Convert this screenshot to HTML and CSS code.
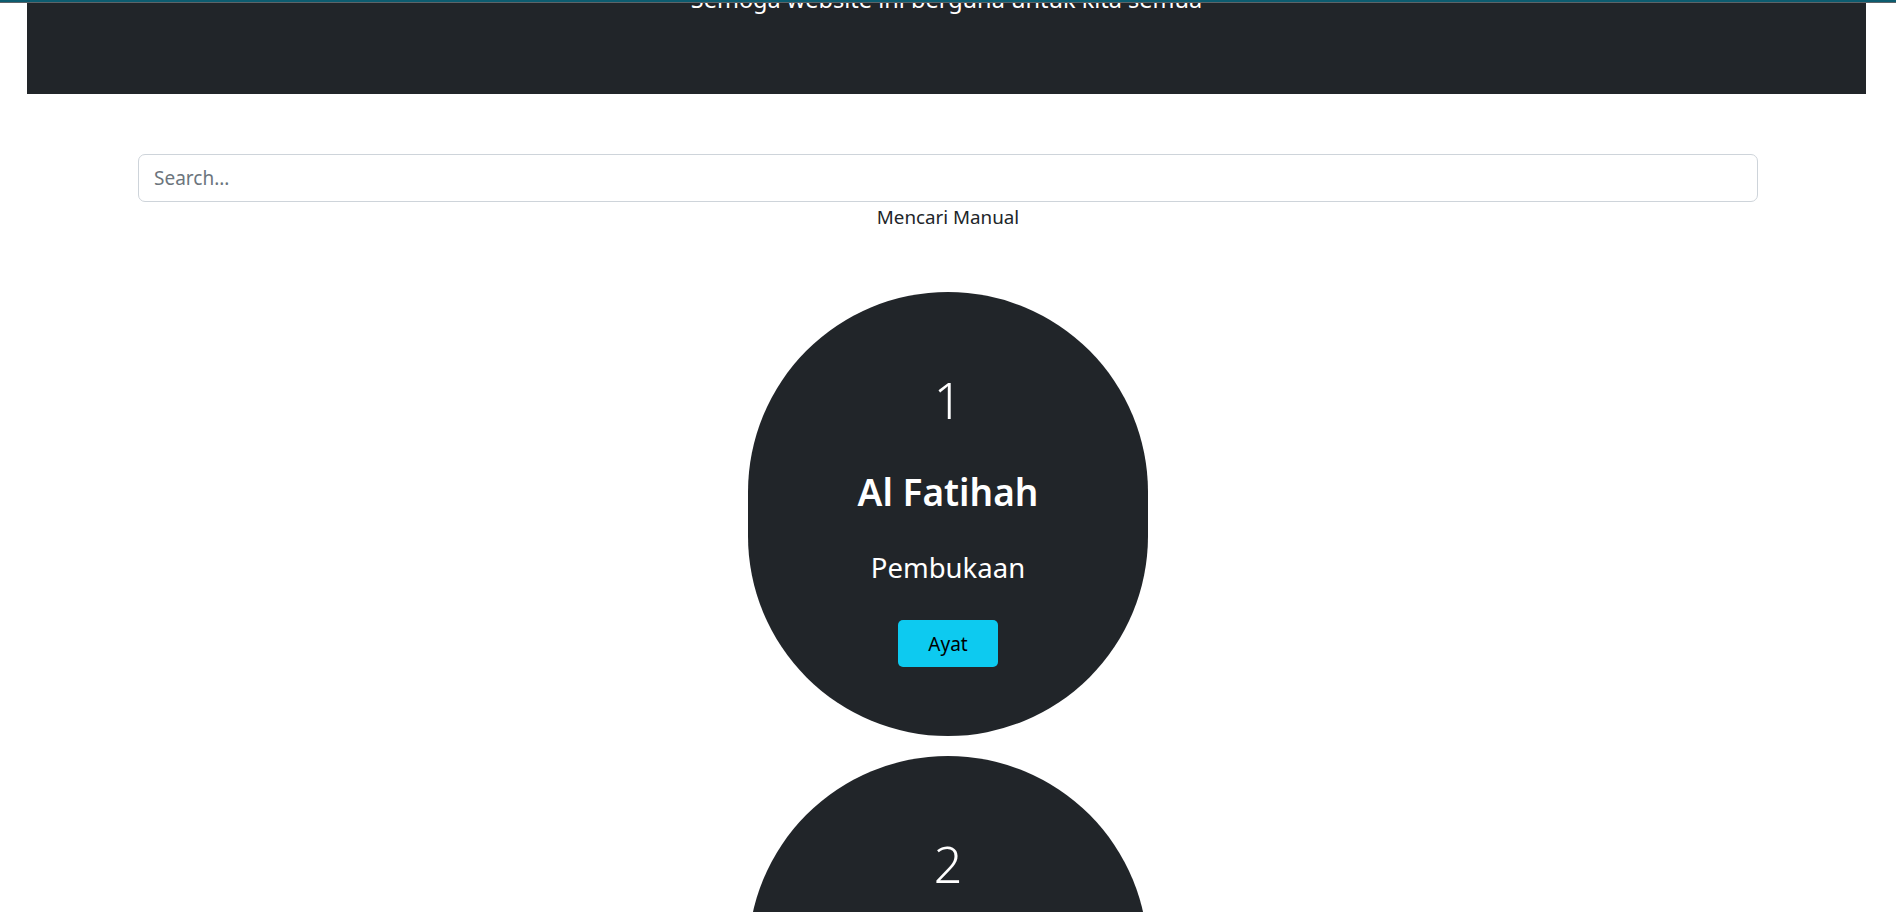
FILE: index.html
```html
<!DOCTYPE html>
<html lang="id">
<head>
<meta charset="utf-8">
<title>Al-Qur'an</title>
<link rel="stylesheet" href="styles.css">
</head>
<body>
<div class="topline"></div>
<header class="hero">
  <p class="hero-lead">Semoga website ini berguna untuk kita semua</p>
</header>
<main class="container">
  <input class="search" type="text" placeholder="Search...">
  <p class="search-note">Mencari Manual</p>
  <section class="surah-list">
    <article class="surah">
      <div class="surah-num">1</div>
      <h2 class="surah-name">Al Fatihah</h2>
      <p class="surah-arti">Pembukaan</p>
      <button class="btn-ayat">Ayat</button>
    </article>
    <article class="surah">
      <div class="surah-num">2</div>
      <h2 class="surah-name">Al Baqarah</h2>
      <p class="surah-arti">Sapi Betina</p>
      <button class="btn-ayat">Ayat</button>
    </article>
    <article class="surah">
      <div class="surah-num">3</div>
      <h2 class="surah-name">Ali 'Imran</h2>
      <p class="surah-arti">Keluarga Imran</p>
      <button class="btn-ayat">Ayat</button>
    </article>
  </section>
</main>
</body>
</html>
```

FILE: styles.css
```css
* { box-sizing: border-box; }

html, body {
  margin: 0;
  padding: 0;
  background: #ffffff;
  font-family: "Noto Sans", "Open Sans", "DejaVu Sans", sans-serif;
  color: #212529;
}

.topline {
  height: 3px;
  background: #0c5c6f;
  border-bottom: 1px solid #5d6468;
}

.hero {
  margin: 0 30px 0 27px;
  height: 91px;
  background: #212529;
  overflow: hidden;
  text-align: center;
  color: #ffffff;
}

.hero-lead {
  margin: -16px 0 0;
  font-size: 23.5px;
  line-height: 25px;
  font-weight: 400;
}

.container {
  width: 1620px;
  margin: 60px auto 0;
}

.search {
  display: block;
  width: 100%;
  height: 48px;
  padding: 0 15px;
  font-family: inherit;
  font-size: 19px;
  color: #212529;
  border: 1px solid #ced4da;
  border-radius: 7px;
  outline: none;
}

.search::placeholder { color: #6c757d; }

.search-note {
  margin: 0;
  text-align: center;
  font-size: 18.8px;
  line-height: 30px;
}

.surah-list {
  display: flex;
  flex-direction: column;
  align-items: center;
  gap: 20px;
  margin-top: 60px;
  padding-bottom: 40px;
}

.surah {
  width: 400px;
  height: 444px;
  border-radius: 200px;
  background: #212529;
  color: #ffffff;
  display: flex;
  flex-direction: column;
  align-items: center;
  padding-top: 78px;
}

.surah-num {
  font-size: 50px;
  line-height: 60px;
  font-weight: 300;
}

.surah-name {
  margin: 38px 0 0;
  font-size: 37px;
  line-height: 48px;
  font-weight: 600;
}

.surah-arti {
  margin: 29px 0 0;
  font-size: 27.5px;
  line-height: 45px;
  font-weight: 400;
}

.btn-ayat {
  margin-top: 30px;
  width: 100px;
  height: 47px;
  border: 0;
  border-radius: 5px;
  background: #0dcaf0;
  color: #000000;
  font-family: inherit;
  font-size: 19px;
  cursor: pointer;
}
```
